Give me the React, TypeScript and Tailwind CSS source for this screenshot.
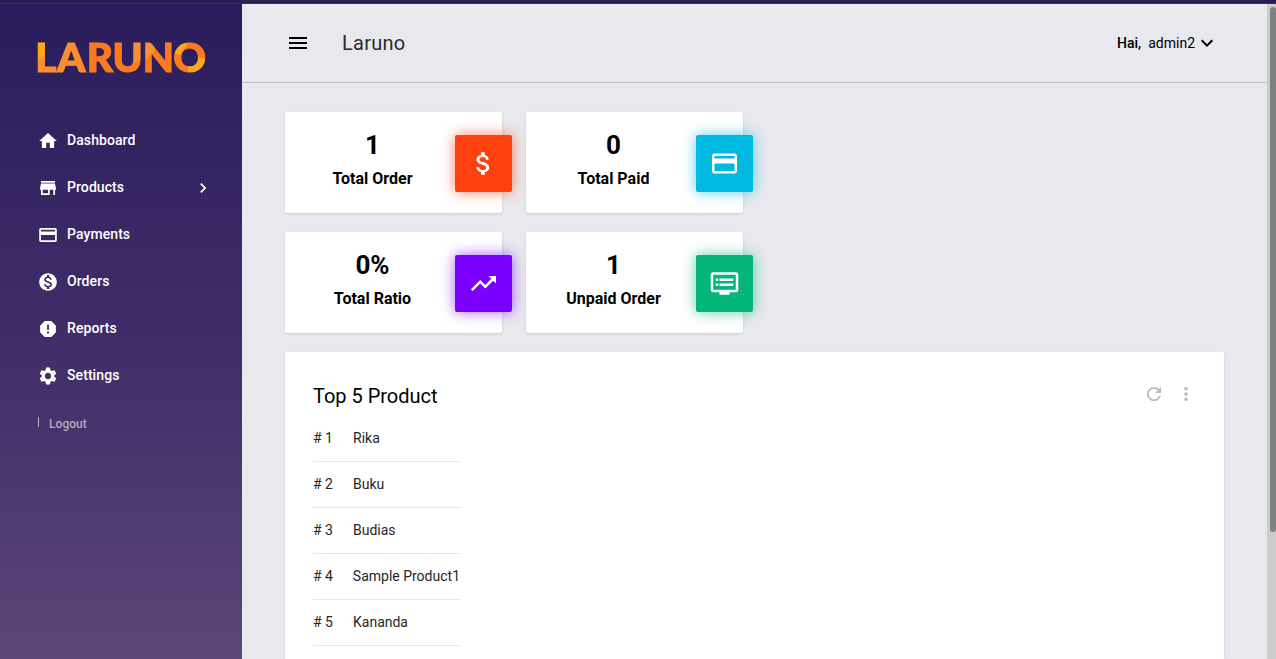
import type { ReactNode } from "react";
import type { IconType } from "react-icons";
import {
  MdAttachMoney, MdDvr, MdExpandMore, MdHome, MdKeyboardArrowRight, MdMenu, MdMonetizationOn,
  MdMoreVert, MdPayment, MdRefresh, MdReport, MdSettings, MdStore, MdTrendingUp,
} from "react-icons/md";

const nav: { label: string; icon: IconType; sub?: boolean }[] = [
  { label: "Dashboard", icon: MdHome },
  { label: "Products", icon: MdStore, sub: true },
  { label: "Payments", icon: MdPayment },
  { label: "Orders", icon: MdMonetizationOn },
  { label: "Reports", icon: MdReport },
  { label: "Settings", icon: MdSettings },
];

const products = ["Rika", "Buku", "Budias", "Sample Product1", "Kananda"];

function Logo() {
  return (
    <svg width="242" height="60" viewBox="0 0 242 60" role="img" aria-label="Laruno">
      <defs>
        <linearGradient id="base" x1="37" x2="206" y1="0" y2="0" gradientUnits="userSpaceOnUse">
          <stop offset="0" stopColor="#f89131" />
          <stop offset="0.295" stopColor="#f88c2d" />
          <stop offset="0.3" stopColor="#f97b1e" />
          <stop offset="1" stopColor="#f97b1e" />
        </linearGradient>
        <mask id="word" maskUnits="userSpaceOnUse" x="0" y="0" width="242" height="60">
          <text x="35.2 57 86.7 112.4 142.8 173.2" y="44.2" fill="#fff" stroke="#fff" strokeWidth="1.1" fontFamily="Lato" fontWeight="900" fontSize="40.5">LARUNO</text>
        </mask>
      </defs>
      <g mask="url(#word)">
        <rect x="30" y="5" width="180" height="45" fill="url(#base)" />
        <path d="M30 5H45V27L37 33H30Z" fill="#fba919" />
        <path d="M132 5H142V31L132 36Z" fill="#f89131" />
        <path d="M143 5H151L155 23L143 34Z" fill="#f89131" />
        <path d="M172 25L180 27L187 17V5H172Z" fill="#fba919" />
        <path d="M210 32L197 29L197 34L188 38V50H210Z" fill="#fba919" />
      </g>
    </svg>
  );
}

function Sidebar() {
  return (
    <aside className="flex w-[242px] shrink-0 flex-col bg-linear-to-b from-[#2a1b5b] via-[#422f69] via-55% to-[#5b4678] pt-[24px] text-white">
      <Logo />
      <nav className="mt-[29px] flex flex-col">
        {nav.map(({ label, icon: Icon, sub }) => (
          <a key={label} className="flex h-[47px] items-center pl-[37px] pr-[29px] text-[14px] font-medium tracking-[0.08px]">
            <Icon size={22} className="scale-[0.96]" />
            <span className="ml-[8px] flex-1">{label}</span>
            {sub && <MdKeyboardArrowRight size={20} />}
          </a>
        ))}
      </nav>
      <div className="mt-[14px] flex h-[22px] items-center pl-[38px] text-[12px] font-medium tracking-[0.05px] text-[#b3abb9]">
        <span className="mb-[4px] h-[10px] w-px bg-[#b8b3b4]" />
        <span className="ml-[10px]">Logout</span>
      </div>
    </aside>
  );
}

function StatCard({ value, label, tone, children }: { value: string; label: string; tone: string; children: ReactNode }) {
  return (
    <div className="relative h-[101px] w-[217px] rounded-[2px] bg-white shadow-[0_1px_3px_rgba(0,0,0,0.12)]">
      <div className="flex w-[175px] flex-col items-center pt-[17px] text-black">
        <strong className="text-[26px] leading-[32px] font-bold">{value}</strong>
        <span className="mt-[6px] text-[16px] leading-[24px] font-bold whitespace-nowrap">{label}</span>
      </div>
      <div className={`absolute top-[23px] left-[170px] flex size-[57px] items-center justify-center rounded-[2px] text-white ${tone}`}>
        {children}
      </div>
    </div>
  );
}

export default function App() {
  return (
    <div className="flex h-[659px] w-[1276px] flex-col overflow-hidden bg-[#e8e9ee] font-['Roboto',sans-serif]">
      <div className="h-[4px] shrink-0 border-b border-[#3b2d69] bg-[#2a1d50]" />
      <div className="flex min-h-0 flex-1">
        <Sidebar />
        <main className="flex min-w-0 flex-1 flex-col">
          <header className="flex h-[79px] shrink-0 items-center border-b border-[#bcbdbf] pr-[48px] pl-[44px]">
            <MdMenu size={24} className="text-black" />
            <h1 className="ml-[32px] flex-1 text-[20px] tracking-[0.25px] text-[#2b2b2b]">Laruno</h1>
            <div className="flex items-center text-[14px] text-black">
              <span className="font-medium">Hai,</span>
              <span className="ml-[7px]">admin2</span>
              <MdExpandMore size={24} />
            </div>
          </header>
          <div className="flex flex-1 flex-col pl-[43px] pt-[29px]">
            <section className="grid grid-cols-[217px_217px] gap-x-[24px] gap-y-[19px]">
              <StatCard value="1" label="Total Order" tone="bg-[#ff410f] shadow-[0_0_14px_#ff410fa6]">
                <MdAttachMoney size={31} className="scale-[0.97]" />
              </StatCard>
              <StatCard value="0" label="Total Paid" tone="bg-[#00b9e1] shadow-[0_0_14px_#00b9e1a6]">
                <MdPayment size={31} className="scale-[0.97]" />
              </StatCard>
              <StatCard value="0%" label="Total Ratio" tone="bg-[#7b00ff] shadow-[0_0_14px_#7b00ffa6]">
                <MdTrendingUp size={31} className="scale-[0.97]" />
              </StatCard>
              <StatCard value="1" label="Unpaid Order" tone="bg-[#05b67c] shadow-[0_0_14px_#05b67ca6]">
                <MdDvr size={31} className="scale-[0.97]" />
              </StatCard>
            </section>
            <section className="mt-[19px] w-[939px] flex-1 rounded-t-[2px] bg-white px-[28px] pt-[28px] shadow-[0_1px_3px_rgba(0,0,0,0.12)]">
              <div className="flex h-[32px] items-center">
                <h2 className="flex-1 text-[20px] tracking-[-0.02px] text-black">Top 5 Product</h2>
                <div className="-mr-px mb-[4px] flex gap-[10px] text-[#bababa]">
                  <MdRefresh size={22} className="scale-[0.96]" />
                  <MdMoreVert size={22} className="scale-[0.96]" />
                </div>
              </div>
              <ul className="mt-[4px] w-[147px] text-[14px] text-[#262626]">
                {products.map((name, i) => (
                  <li key={name} className="flex h-[46px] items-center border-b border-[#e8e8e8]">
                    <span className="w-[40px]"># {i + 1}</span>
                    <span className="whitespace-nowrap">{name}</span>
                  </li>
                ))}
              </ul>
            </section>
          </div>
        </main>
        <div className="w-[9px] shrink-0 bg-[#cccccc] pt-[3px] pl-[3px]">
          <div className="h-[525px] w-[6px] rounded-[3px] bg-[#7e8281]" />
        </div>
      </div>
    </div>
  );
}
